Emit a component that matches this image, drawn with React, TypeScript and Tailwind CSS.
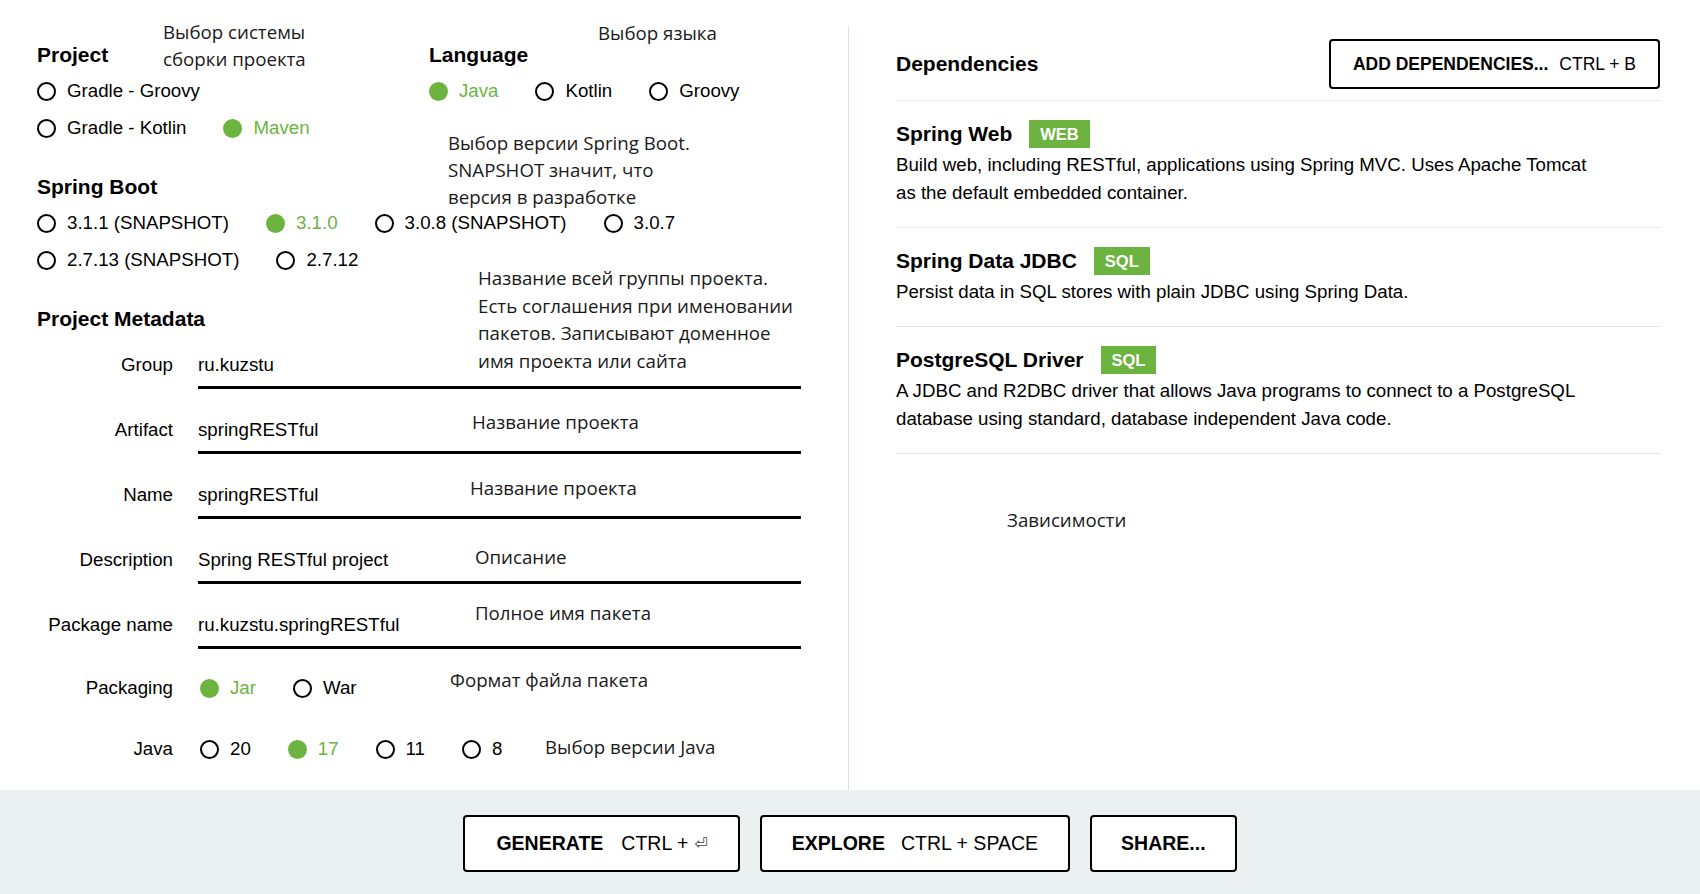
import React from 'react';

type Opt = { label: string; checked?: boolean };

const Radio = ({ label, checked }: Opt) => (
  <div className="flex items-center h-[28px]">
    {checked ? (
      <span className="w-[19px] h-[19px] rounded-full bg-[#6db33f]" />
    ) : (
      <span className="w-[19px] h-[19px] rounded-full border-2 border-black" />
    )}
    <span className={checked ? 'ml-[11px] text-[#6db33f]' : 'ml-[11px] text-black'}>{label}</span>
  </div>
);

const RadioRow = ({ options }: { options: Opt[] }) => (
  <div className="flex gap-[37px]">
    {options.map((o) => (
      <Radio key={o.label} {...o} />
    ))}
  </div>
);

const Heading = ({ children }: { children: React.ReactNode }) => (
  <h2 className="text-[21px] leading-[28px] font-bold text-black">{children}</h2>
);

// callouts drawn over the form
const Note = ({ x, y, lines, lh = 'leading-[27px]' }: { x: number; y: number; lines: string[]; lh?: string }) => (
  <div
    className={`absolute font-['Open_Sans',sans-serif] text-[18.7px] ${lh} text-[#1a1a1a] whitespace-nowrap`}
    style={{ left: x, top: y }}
  >
    {lines.map((l) => (
      <div key={l}>{l}</div>
    ))}
  </div>
);

const Field = ({ label, value, first }: { label: string; value: string; first?: boolean }) => (
  <div className={first ? 'grid grid-cols-[136px_1fr] gap-x-[25px]' : 'grid grid-cols-[136px_1fr] gap-x-[25px] mt-[27px]'}>
    <div className="text-right leading-[28px]">{label}</div>
    <div className="leading-[28px] pb-[7px] border-b-[3px] border-black">{value}</div>
  </div>
);

const deps = [
  {
    name: 'Spring Web',
    tag: 'WEB',
    desc: 'Build web, including RESTful, applications using Spring MVC. Uses Apache Tomcat as the default embedded container.',
  },
  {
    name: 'Spring Data JDBC',
    tag: 'SQL',
    desc: 'Persist data in SQL stores with plain JDBC using Spring Data.',
  },
  {
    name: 'PostgreSQL Driver',
    tag: 'SQL',
    desc: 'A JDBC and R2DBC driver that allows Java programs to connect to a PostgreSQL database using standard, database independent Java code.',
  },
];

export default function App() {
  return (
    <div className="relative w-[1700px] h-[894px] bg-white text-black font-['Liberation_Sans',Arial,sans-serif] text-[18.7px] overflow-hidden">
      <div className="flex h-[790px] pt-[27px]">
        {/* left: project options */}
        <div className="w-[849px] h-full border-r border-[#d3e2e2] pl-[37px] pr-[47px] pt-[14px]">
          <div className="flex">
            <div className="w-[392px]">
              <Heading>Project</Heading>
              <div className="mt-[8px] flex flex-col gap-[9px]">
                <RadioRow options={[{ label: 'Gradle - Groovy' }]} />
                <RadioRow options={[{ label: 'Gradle - Kotlin' }, { label: 'Maven', checked: true }]} />
              </div>
            </div>
            <div>
              <Heading>Language</Heading>
              <div className="mt-[8px]">
                <RadioRow options={[{ label: 'Java', checked: true }, { label: 'Kotlin' }, { label: 'Groovy' }]} />
              </div>
            </div>
          </div>

          <div className="mt-[31px]">
            <Heading>Spring Boot</Heading>
            <div className="mt-[8px] flex flex-col gap-[9px]">
              <RadioRow
                options={[
                  { label: '3.1.1 (SNAPSHOT)' },
                  { label: '3.1.0', checked: true },
                  { label: '3.0.8 (SNAPSHOT)' },
                  { label: '3.0.7' },
                ]}
              />
              <RadioRow options={[{ label: '2.7.13 (SNAPSHOT)' }, { label: '2.7.12' }]} />
            </div>
          </div>

          <div className="mt-[31px]">
            <Heading>Project Metadata</Heading>
            <div className="mt-[18px]">
              <Field first label="Group" value="ru.kuzstu" />
              <Field label="Artifact" value="springRESTful" />
              <Field label="Name" value="springRESTful" />
              <Field label="Description" value="Spring RESTful project" />
              <Field label="Package name" value="ru.kuzstu.springRESTful" />
              <div className="grid grid-cols-[136px_1fr] gap-x-[25px] mt-[25px]">
                <div className="text-right leading-[28px]">Packaging</div>
                <div className="ml-[2px]">
                  <RadioRow options={[{ label: 'Jar', checked: true }, { label: 'War' }]} />
                </div>
              </div>
              <div className="grid grid-cols-[136px_1fr] gap-x-[25px] mt-[33px]">
                <div className="text-right leading-[28px]">Java</div>
                <div className="ml-[2px]">
                  <RadioRow options={[{ label: '20' }, { label: '17', checked: true }, { label: '11' }, { label: '8' }]} />
                </div>
              </div>
            </div>
          </div>
        </div>

        {/* right: dependencies */}
        <div className="flex-1 h-full pl-[47px] pr-[40px] pt-[12px]">
          <div className="flex items-center justify-between pb-[11px] border-b border-[#e1e9e9]">
            <h2 className="text-[21px] font-bold">Dependencies</h2>
            <button className="h-[50px] px-[22px] border-2 border-black rounded-[4px] bg-white text-[17.5px] flex items-center">
              <span className="font-bold">ADD DEPENDENCIES...</span>
              <span className="ml-[11px]">CTRL + B</span>
            </button>
          </div>
          {deps.map((d) => (
            <div key={d.name} className="pt-[19px] pb-[20px] border-b border-[#e1e9e9]">
              <div className="flex items-center h-[28px]">
                <span className="text-[21px] font-bold">{d.name}</span>
                <span className="ml-[17px] h-[28px] px-[11px] bg-[#6db33f] text-white font-bold text-[16.5px] flex items-center">
                  {d.tag}
                </span>
              </div>
              <p className="mt-[3px] max-w-[700px] leading-[28px]">{d.desc}</p>
            </div>
          ))}
          <div className="mt-[52px] ml-[111px] font-['Open_Sans',sans-serif] text-[18.7px] leading-[28px] text-[#1a1a1a]">
            Зависимости
          </div>
        </div>
      </div>

      {/* actions */}
      <div className="h-[104px] bg-[#ebf0f0] flex items-start justify-center gap-[20px] pt-[25px] text-[19.5px]">
        <button className="h-[57px] pl-[31px] pr-[30px] border-2 border-black rounded-[4px] bg-white flex items-center">
          <span className="font-bold">GENERATE</span>
          <span className="ml-[18px]">CTRL + </span>
          <span className="ml-[6px] text-[16px] text-[#444] font-['DejaVu_Sans',sans-serif]">⏎</span>
        </button>
        <button className="h-[57px] px-[30px] border-2 border-black rounded-[4px] bg-white flex items-center">
          <span className="font-bold">EXPLORE</span>
          <span className="ml-[16px]">CTRL + SPACE</span>
        </button>
        <button className="h-[57px] px-[29px] border-2 border-black rounded-[4px] bg-white flex items-center">
          <span className="font-bold">SHARE...</span>
        </button>
      </div>

      <Note x={163} y={18} lines={['Выбор системы', 'сборки проекта']} />
      <Note x={598} y={19} lines={['Выбор языка']} />
      <Note x={448} y={129} lines={['Выбор версии Spring Boot.', 'SNAPSHOT значит, что', 'версия в разработке']} />
      <Note
        x={478}
        y={264}
        lh="leading-[27.5px]"
        lines={['Название всей группы проекта.', 'Есть соглашения при именовании', 'пакетов. Записывают доменное', 'имя проекта или сайта']}
      />
      <Note x={472} y={408} lines={['Название проекта']} />
      <Note x={470} y={474} lines={['Название проекта ']} />
      <Note x={475} y={543} lines={['Описание']} />
      <Note x={475} y={599} lines={['Полное имя пакета']} />
      <Note x={450} y={666} lines={['Формат файла пакета']} />
      <Note x={545} y={733} lines={['Выбор версии Java']} />
    </div>
  );
}
